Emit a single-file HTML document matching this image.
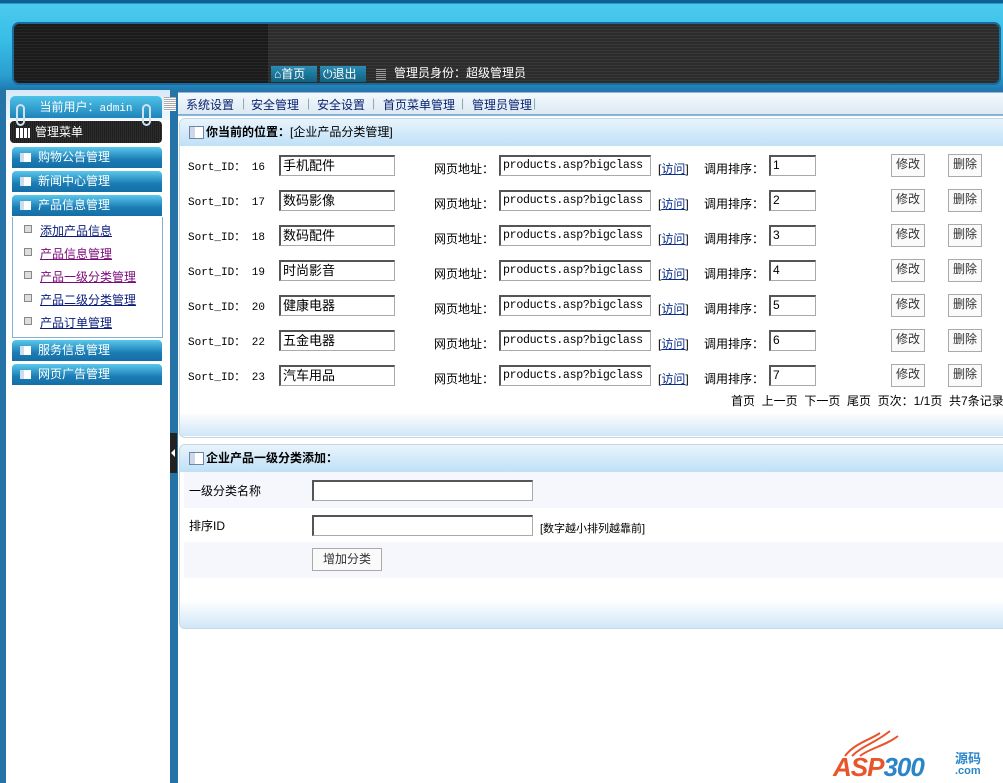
<!DOCTYPE html>
<html><head><meta charset="utf-8">
<style>
*{margin:0;padding:0;box-sizing:border-box}
body{width:1003px;height:783px;overflow:hidden;background:#fff;font:12px "Liberation Sans","Noto Sans CJK SC",sans-serif;color:#000;position:relative}
.a{position:absolute}
#hdr{left:0;top:0;width:1003px;height:90px;background:linear-gradient(#0e5f95 0,#0e5f95 3px,#4ccbee 4px,#38bde6 40px,#2a9fd0 75px,#1f78b0 90px)}
#dark{left:12px;top:22px;width:989px;height:63px;border:2px solid #1a6a9c;border-radius:7px;background:repeating-linear-gradient(#2c2c2c 0,#2c2c2c 2px,#383838 2px,#383838 3px)}
#darkl{left:14px;top:24px;width:254px;height:59px;border-radius:5px 0 0 5px;background:repeating-linear-gradient(#1b1b1b 0,#1b1b1b 2px,#262626 2px,#262626 3px)}
.hb{top:66px;height:16px;background:linear-gradient(#2a8cb5,#12607f);color:#fff;font-size:12px;line-height:16px;padding-left:3px}
#band{left:0;top:90px;width:1003px;height:693px;background:#fff}
#lcol{left:0;top:90px;width:6px;height:693px;background:#2673a8}
#rcol{left:170px;top:90px;width:8px;height:693px;background:#2673a8}
#topband{left:6px;top:90px;width:164px;height:30px;background:linear-gradient(#d8e9f6,#eef6fc)}
#nav{left:178px;top:90px;width:825px;height:27px;background:linear-gradient(#2a75ad 0,#2a75ad 2px,#f3f9fd 3px,#dde9f3 24px,#2a75ad 25px,#f6fafd 26px)}
#nav span{position:absolute;top:6px;color:#0a2270;font-size:12px}
#user{left:10px;top:96px;width:152px;height:22px;border-radius:5px 5px 0 0;background:linear-gradient(#4fc2e8,#1d84bb);color:#fff;text-align:center;line-height:22px;font-size:12px}
.ring{width:9px;height:22px;border:2px solid #cfe3ef;border-radius:5px;top:104px;background:transparent}
#menu{left:10px;top:121px;width:152px;height:22px;border-radius:4px;background:repeating-linear-gradient(90deg,#1e1e1e 0,#1e1e1e 1px,#2d2d2d 1px,#2d2d2d 2px);color:#fff;line-height:22px;padding-left:25px;font-size:12px}
.mi{left:12px;width:150px;height:21px;border-radius:4px 4px 0 0;background:linear-gradient(#5ac8ec,#1b7cb4 60%,#156ea6);color:#fff;line-height:21px;padding-left:26px;font-size:12px}
.mi i{position:absolute;left:8px;top:6px;width:11px;height:9px;background:#fff;border-left:4px solid #cde;}
#sub{left:12px;top:217px;width:151px;height:121px;border:1px solid #7fb3d6;border-top:none;background:#fff}
.sl{left:26px;font-size:12px;color:#0a1d7a;text-decoration:underline}
.sl i{position:absolute;left:-2px;top:3px;width:8px;height:8px;border:1px solid #888;background:#ddd}
.sl span{margin-left:14px}
.panel{left:179px;width:830px;border:1px solid #c5d6e4;border-radius:6px;background:#fff;overflow:hidden}
.ph{left:0;top:0;width:100%;height:27px;background:linear-gradient(#e9f4fc,#bfe0f7);font-weight:bold;font-size:12px;line-height:27px;padding-left:26px}
.ph i{position:absolute;left:9px;top:7px;width:15px;height:13px;border:1px solid #6d86a8;background:linear-gradient(90deg,#cdd9e8 0,#cdd9e8 5px,#fff 5px)}
.pf{left:0;width:100%;height:22px;background:linear-gradient(#fbfdff,#cfe6f7)}
.mono{font-family:"Liberation Mono","Noto Sans CJK SC",monospace;font-size:11px}
.inp{height:21px;border:1px solid #aaa;border-top:2px solid #555;border-left:2px solid #555;background:#fff;font-size:13px;line-height:17px;padding-left:2px;overflow:hidden;white-space:nowrap}
.btn{width:34px;height:23px;border:1px solid #aaa;background:#fafafa;text-align:center;line-height:19px;font-size:12px;color:#333}
.lk{color:#0a2e8c;text-decoration:underline}
</style></head><body>
<div id="hdr" class="a"></div>
<div id="dark" class="a"></div>
<div id="darkl" class="a"></div>
<div class="a hb" style="left:271px;width:46px">&#8962;首页</div>
<div class="a hb" style="left:320px;width:46px">&#x23FB;退出</div>
<div class="a" style="left:376px;top:69px;width:10px;height:11px;background:repeating-linear-gradient(#999 0,#999 1px,transparent 1px,transparent 2px)"></div>
<div class="a" style="left:394px;top:64px;color:#fff;font-size:12px">管理员身份：超级管理员</div>

<div id="band" class="a"></div>
<div id="topband" class="a"></div>
<div id="lcol" class="a"></div>
<div id="rcol" class="a"></div>
<div id="nav" class="a">
<span style="left:8px">系统设置</span><span style="left:64px;color:#8aa">|</span>
<span style="left:73px">安全管理</span><span style="left:129px;color:#8aa">|</span>
<span style="left:139px">安全设置</span><span style="left:194px;color:#8aa">|</span>
<span style="left:205px">首页菜单管理</span><span style="left:283px;color:#8aa">|</span>
<span style="left:294px">管理员管理</span><span style="left:355px;color:#8aa">|</span>
</div>
<div class="a" style="left:164px;top:97px;width:12px;height:14px;background:repeating-linear-gradient(#aaa 0,#aaa 1px,#fff 1px,#fff 2px)"></div>

<div id="user" class="a">当前用户：<span class="mono">admin</span></div>
<div id="menu" class="a"><div class="a" style="left:6px;top:7px;width:14px;height:10px;background:repeating-linear-gradient(90deg,#fff 0,#fff 3px,transparent 3px,transparent 4px)"></div>管理菜单</div>
<div class="a ring" style="left:16px"></div>
<div class="a ring" style="left:142px"></div>
<div class="a mi" style="top:147px"><i></i>购物公告管理</div>
<div class="a mi" style="top:171px"><i></i>新闻中心管理</div>
<div class="a mi" style="top:195px"><i></i>产品信息管理</div>
<div id="sub" class="a"></div>
<div class="a sl" style="top:222px"><i></i><span>添加产品信息</span></div>
<div class="a sl" style="top:245px;color:#7a0a7a"><i></i><span>产品信息管理</span></div>
<div class="a sl" style="top:268px;color:#7a0a7a"><i></i><span>产品一级分类管理</span></div>
<div class="a sl" style="top:291px"><i></i><span>产品二级分类管理</span></div>
<div class="a sl" style="top:314px"><i></i><span>产品订单管理</span></div>
<div class="a mi" style="top:340px"><i></i>服务信息管理</div>
<div class="a mi" style="top:364px"><i></i>网页广告管理</div>
<div class="a" style="left:170px;top:433px;width:7px;height:40px;background:#222"></div>
<div class="a" style="left:171px;top:449px;width:0;height:0;border:4px solid transparent;border-right-color:#fff;border-left:none"></div>

<div class="a panel" style="top:118px;height:320px">
<div class="a ph"><i></i>你当前的位置：<span style="font-weight:normal">[企业产品分类管理]</span></div>
<div class="a pf" style="top:295px"></div>
</div>

<div id="rows"></div>
<script>
var names=["手机配件","数码影像","数码配件","时尚影音","健康电器","五金电器","汽车用品"],ids=[16,17,18,19,20,22,23],h="";
for(var i=0;i<7;i++){var y=155+i*35;
h+='<div class="a mono" style="left:188px;top:'+(y+3)+'px">Sort_ID： '+ids[i]+'</div>';
h+='<div class="a inp" style="left:279px;top:'+y+'px;width:116px">'+names[i]+'</div>';
h+='<div class="a" style="left:434px;top:'+(y+5)+'px">网页地址：</div>';
h+='<div class="a inp mono" style="left:499px;top:'+y+'px;width:152px;font-size:11.6px;letter-spacing:-0.3px">products.asp?bigclass</div>';
h+='<div class="a" style="left:658px;top:'+(y+5)+'px">[<span class="lk">访问</span>]</div>';
h+='<div class="a" style="left:704px;top:'+(y+5)+'px">调用排序：</div>';
h+='<div class="a inp" style="left:769px;top:'+y+'px;width:47px;font-size:12px">'+(i+1)+'</div>';
h+='<div class="a btn" style="left:891px;top:'+(y-1)+'px">修改</div>';
h+='<div class="a btn" style="left:948px;top:'+(y-1)+'px">删除</div>';}
document.getElementById("rows").innerHTML=h;
</script>
<div class="a" style="left:731px;top:392px;white-space:nowrap">首页&nbsp; 上一页&nbsp; 下一页&nbsp; 尾页&nbsp; 页次：1/1页&nbsp; 共7条记录</div>

<div class="a panel" style="top:444px;height:185px">
<div class="a ph"><i></i>企业产品一级分类添加：</div>
<div class="a" style="left:4px;top:27px;width:822px;height:36px;background:#f5f7fc"></div>
<div class="a" style="left:4px;top:97px;width:822px;height:36px;background:#f5f7fc"></div>
<div class="a pf" style="top:157px;height:27px"></div>
</div>
<div class="a" style="left:189px;top:482px">一级分类名称</div>
<div class="a inp" style="left:312px;top:480px;width:221px"></div>
<div class="a" style="left:189px;top:517px">排序ID</div>
<div class="a inp" style="left:312px;top:515px;width:221px"></div>
<div class="a" style="left:540px;top:520px;font-size:11px">[数字越小排列越靠前]</div>
<div class="a btn" style="left:312px;top:548px;width:70px;line-height:21px">增加分类</div>

<svg class="a" style="left:840px;top:728px" width="70" height="30"><path d="M5 28 C15 15 30 12 40 5 M12 28 C22 18 35 15 50 3 M20 28 C30 20 45 18 58 8" stroke="#e8552a" stroke-width="2" fill="none"/></svg>
<div class="a" style="left:833px;top:752px;font:italic bold 26px 'Liberation Sans',sans-serif;color:#e8552a;letter-spacing:-1px">ASP<span style="color:#2a86c8">300</span></div>
<div class="a" style="left:955px;top:748px;color:#2a86c8;font-weight:bold;font-size:13px">源码</div>
<div class="a" style="left:955px;top:765px;color:#2a86c8;font-weight:bold;font-size:11px">.com</div>
</body></html>
